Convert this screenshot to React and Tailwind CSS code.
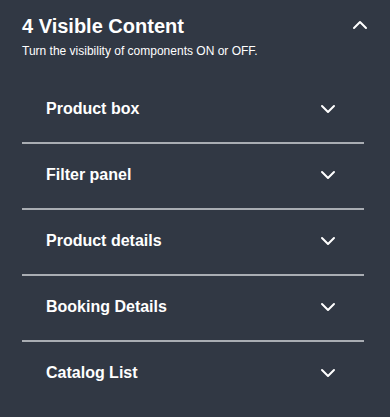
import React from 'react';
import { ChevronDown, ChevronUp } from 'lucide-react';

const sections = ['Product box', 'Filter panel', 'Product details', 'Booking Details', 'Catalog List'];

const App = () => {
  return (
    <div className="min-h-screen bg-[#313844] text-white font-['Liberation_Sans',Arial,sans-serif] pl-[22px] pr-[18px] pt-[14px] pb-[9px]">
      {/* Header */}
      <div className="flex items-start justify-between">
        <div>
          <h2 className="text-[20px] leading-[24px] font-bold">4 Visible Content</h2>
          <p className="mt-[5px] text-[12px] leading-[16px]">Turn the visibility of components ON or OFF.</p>
        </div>
        <ChevronUp size={24} strokeWidth={2} className="-mt-[1px]" />
      </div>

      {/* Sections */}
      <div className="mt-[19px] mr-[8px]">
        {sections.map((name, i) => (
          <div
            key={name}
            className={`flex items-center justify-between pl-[24px] pr-[24px] pt-[19px] pb-[21px] ${
              i < sections.length - 1 ? 'border-b-2 border-[#a9adb3]' : ''
            }`}
          >
            <span className="text-[16px] leading-[24px] font-bold">{name}</span>
            <ChevronDown size={24} strokeWidth={2} />
          </div>
        ))}
      </div>
    </div>
  );
};

export default App;
